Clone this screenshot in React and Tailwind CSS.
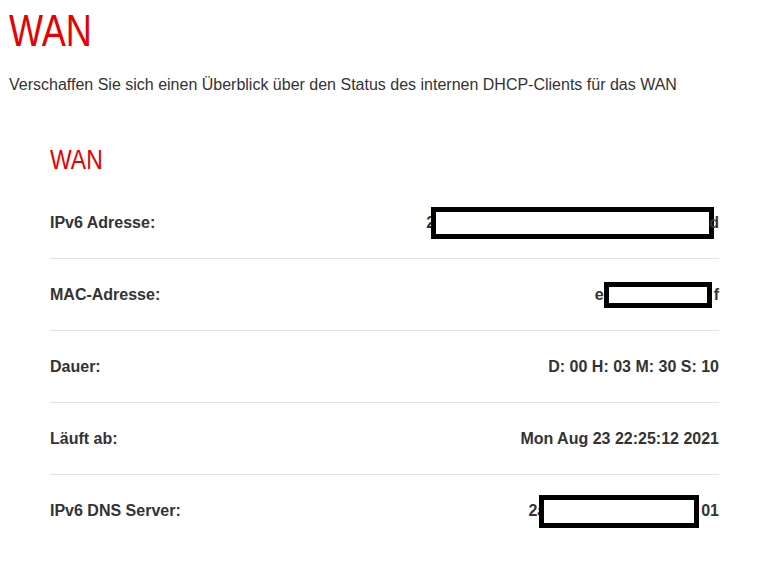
import React from "react";

const sans = { fontFamily: '"Liberation Sans", Arial, sans-serif' };

function Mask({ className }) {
  return <span className={`inline-block shrink-0 border-[5px] border-black bg-white ${className}`} />;
}

function Row({ label, children, last }) {
  return (
    <div className={`flex items-center justify-between pt-[26px] pb-[25px] ${last ? "" : "border-b border-[#e3e3e3]"}`}>
      <span className="text-[16px] leading-[20px] font-bold text-[#333]">{label}</span>
      <span className="flex h-[20px] items-center text-[16px] leading-[20px] font-bold text-[#333]">{children}</span>
    </div>
  );
}

export default function App() {
  return (
    <div className="min-h-[565px] w-[758px] bg-white pl-[9px]" style={sans}>
      <h1 className="pt-[9px] text-[44px] leading-[44px] font-normal text-[#e60000]">
        <span className="inline-block origin-left scale-x-[0.82]">WAN</span>
      </h1>
      <p className="mt-[22px] text-[16px] leading-[20px] text-[#333]">
        Verschaffen Sie sich einen Überblick über den Status des internen DHCP-Clients für das WAN
      </p>
      <section className="ml-[41px] mt-[51px] w-[669px]">
        <h2 className="text-[28px] leading-[28px] font-normal text-[#e60000]">
          <span className="inline-block origin-left scale-x-[0.82]">WAN</span>
        </h2>
        <div className="mt-[13px]">
          <Row label="IPv6 Adresse:">
            <span>2</span>
            <Mask className="-ml-[4px] h-[32px] w-[283px]" />
            <span className="-ml-[5px]">d</span>
          </Row>
          <Row label="MAC-Adresse:">
            <span>e</span>
            <Mask className="h-[26px] w-[108px]" />
            <span className="ml-[2px]">f</span>
          </Row>
          <Row label="Dauer:">
            <span>D: 00 H: 03 M: 30 S: 10</span>
          </Row>
          <Row label="Läuft ab:">
            <span>Mon Aug 23 22:25:12 2021</span>
          </Row>
          <Row label="IPv6 DNS Server:" last>
            <span>2a</span>
            <Mask className="-ml-[7px] h-[33px] w-[160px]" />
            <span className="ml-[2px]">01</span>
          </Row>
        </div>
      </section>
    </div>
  );
}
